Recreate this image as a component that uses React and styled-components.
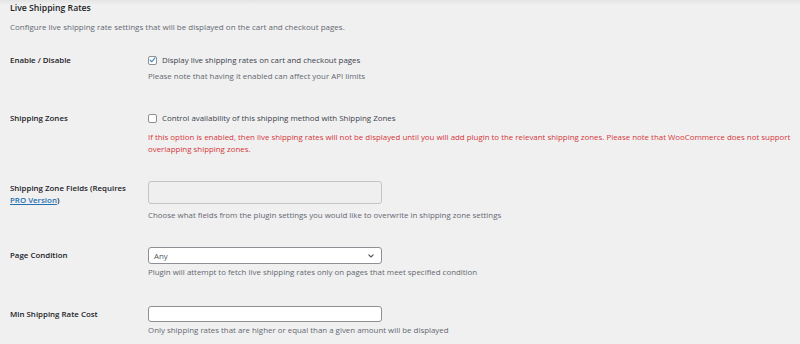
import React from "react";
import styled, { createGlobalStyle } from "styled-components";

const Global = createGlobalStyle`
  html, body { margin: 0; padding: 0; background: #f0f0f1; }
  body {
    font-family: "Open Sans", "Noto Sans", sans-serif;
    color: #1d2327;
    -webkit-font-smoothing: antialiased;
  }
`;

const Page = styled.div`
  width: 800px;
  height: 344px;
  box-sizing: border-box;
  padding: 2px 0 0 10px;
  background: linear-gradient(#e4e4e5 0, #f0f0f1 5px);
  overflow: hidden;
`;

const Title = styled.h2`
  margin: 0;
  font-size: 8.7px;
  line-height: 12px;
  font-weight: 600;
  color: #1d2327;
`;

const Intro = styled.p`
  margin: 7px 0 0;
  font-size: 8px;
  line-height: 12px;
  color: #646970;
`;

const Table = styled.div`
  margin-top: 6px;
  display: flex;
  flex-direction: column;
`;

const Row = styled.div`
  display: grid;
  grid-template-columns: 138px 1fr;
  padding-top: ${(p) => p.$pt || 13}px;
  padding-bottom: ${(p) => p.$pb || 13}px;
`;

const Label = styled.div`
  font-size: 7.9px;
  line-height: 12px;
  font-weight: 600;
  color: #1d2327;
  padding-top: ${(p) => p.$pt || 0}px;
`;

const Link = styled.a`
  color: #2271b1;
  text-decoration: underline;
`;

const Cell = styled.div`
  display: flex;
  flex-direction: column;
  align-items: flex-start;
`;

const CheckLine = styled.label`
  display: flex;
  align-items: center;
  gap: 5px;
  font-size: 7.9px;
  line-height: 12px;
  color: #3c434a;
`;

const Box = styled.span`
  width: 9px;
  height: 9px;
  box-sizing: border-box;
  border: 1px solid #8c8f94;
  border-radius: 2px;
  background: #fff;
  display: inline-flex;
  align-items: center;
  justify-content: center;
`;

const Desc = styled.p`
  margin: ${(p) => p.$mt || 0}px 0 0;
  font-size: 7.9px;
  line-height: 12px;
  color: ${(p) => (p.$warn ? "#d63638" : "#646970")};
  max-width: 652px;
`;

const Field = styled.div`
  width: 234px;
  height: ${(p) => p.$h}px;
  box-sizing: border-box;
  border: 1px solid ${(p) => (p.$disabled ? "#c3c4c7" : "#8c8f94")};
  border-radius: 3px;
  background: ${(p) => (p.$disabled ? "#efeff0" : "#fff")};
  display: flex;
  align-items: center;
  justify-content: space-between;
  padding: 0 7px 0 5px;
  font-size: 7.9px;
  color: #50575e;
`;

const Check = () => (
  <svg width="8" height="8" viewBox="0 0 8 8">
    <path d="M1.3 4.1 L3.2 6 L6.8 1.6" fill="none" stroke="#3582c4" strokeWidth="1.3" strokeLinecap="round" strokeLinejoin="round" />
  </svg>
);

const Chevron = () => (
  <svg width="6" height="4" viewBox="0 0 6 4">
    <path d="M0.8 0.8 L3 3 L5.2 0.8" fill="none" stroke="#50575e" strokeWidth="1.1" strokeLinecap="round" strokeLinejoin="round" />
  </svg>
);

export default function App() {
  return (
    <>
      <Global />
      <Page>
        <Title>Live Shipping Rates</Title>
        <Intro>Configure live shipping rate settings that will be displayed on the cart and checkout pages.</Intro>
        <Table>
          <Row $pt={15} $pb={17}>
            <Label>Enable / Disable</Label>
            <Cell>
              <CheckLine>
                <Box><Check /></Box>
                Display live shipping rates on cart and checkout pages
              </CheckLine>
              <Desc $mt={4}>Please note that having it enabled can affect your API limits</Desc>
            </Cell>
          </Row>
          <Row $pt={13}>
            <Label>Shipping Zones</Label>
            <Cell>
              <CheckLine>
                <Box />
                Control availability of this shipping method with Shipping Zones
              </CheckLine>
              <Desc $mt={7} $warn>
                If this option is enabled, then live shipping rates will not be displayed until you will add plugin to the relevant shipping zones. Please note that WooCommerce does not support overlapping shipping zones.
              </Desc>
            </Cell>
          </Row>
          <Row $pt={13} $pb={14}>
            <Label $pt={1}>
              Shipping Zone Fields (Requires
              <br />
              <Link href="#">PRO Version</Link>)
            </Label>
            <Cell>
              <Field $h={23} $disabled />
              <Desc $mt={5}>Choose what fields from the plugin settings you would like to overwrite in shipping zone settings</Desc>
            </Cell>
          </Row>
          <Row $pt={12} $pb={14}>
            <Label $pt={2}>Page Condition</Label>
            <Cell>
              <Field $h={17}>
                <span>Any</span>
                <Chevron />
              </Field>
              <Desc $mt={2}>Plugin will attempt to fetch live shipping rates only on pages that meet specified condition</Desc>
            </Cell>
          </Row>
          <Row $pt={14}>
            <Label $pt={2}>Min Shipping Rate Cost</Label>
            <Cell>
              <Field $h={16} />
              <Desc $mt={2}>Only shipping rates that are higher or equal than a given amount will be displayed</Desc>
            </Cell>
          </Row>
        </Table>
      </Page>
    </>
  );
}
